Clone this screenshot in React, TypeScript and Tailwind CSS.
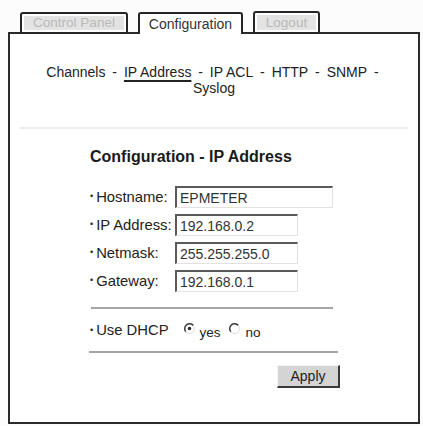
import React from "react";

function Radio({ checked }: { checked: boolean }) {
  return (
    <svg width="11" height="11" viewBox="0 0 12 12" className="shrink-0">
      <circle cx="6" cy="6" r="5" fill="#ffffff" />
      <path d="M10.2 2.8 A5 5 0 0 0 2 9.6" stroke="#3a3a3a" strokeWidth="1.6" fill="none" />
      <path d="M10.2 2.8 A5 5 0 0 1 2 9.6" stroke="#d8d8d8" strokeWidth="1" fill="none" />
      {checked && <circle cx="6" cy="6" r="1.9" fill="#2a2a2a" />}
    </svg>
  );
}

function Field({ label, value, wide }: { label: string; value: string; wide?: boolean }) {
  return (
    <div className="flex h-[28px] items-center">
      <div className="flex w-[85px] items-center">
        <span className="mr-[3px] text-[9px] leading-none">•</span>
        <span className="text-[14.8px] leading-none">{label}</span>
      </div>
      <input
        readOnly
        value={value}
        className={`${wide ? "w-[158px]" : "w-[123px]"} h-[22px] border-b border-l-2 border-r border-t-2 border-b-[#e2e2e2] border-l-[#5a5a5a] border-r-[#e2e2e2] border-t-[#5a5a5a] bg-white pl-[3px] font-['Liberation_Sans',Arial,sans-serif] text-[14px] text-[#333] outline-none`}
      />
    </div>
  );
}

export default function App() {
  const sep = <span className="mx-[3px]"> - </span>;
  return (
    <div className="h-[426px] w-[423px] overflow-hidden bg-[#fdfcfc] pl-[8px] pt-[11px] font-['Liberation_Sans',Arial,sans-serif] text-[#222]">
      <div className="relative z-10 flex h-[23px] items-end gap-[10px] pl-[12px]">
        <div className="h-[22px] w-[108px] rounded-t-[3px] border-2 border-[#262626] bg-white p-[2px]">
          <div className="flex h-full items-center justify-center bg-[#e3e3e3] text-[13.5px] leading-none text-[#b9b9b9]">
            Control Panel
          </div>
        </div>
        <div className="flex h-[22px] w-[105px] items-center justify-center rounded-t-[3px] border-2 border-b-0 border-[#262626] bg-white pb-[1px] text-[14px] leading-none text-[#333]">
          Configuration
        </div>
        <div className="h-[23px] w-[67px] rounded-t-[3px] border-2 border-[#262626] bg-white p-[2px]">
          <div className="flex h-full items-center justify-center bg-[#e3e3e3] text-[13.5px] leading-none text-[#b9b9b9]">
            Logout
          </div>
        </div>
      </div>
      <div className="-mt-[2px] h-[392px] w-[412px] border-2 border-[#2a2a2a] bg-white">
        <div className="mx-auto w-[348px] pt-[30px] text-center text-[14px] leading-[16px] text-[#222]">
          Channels{sep}
          <span className="underline decoration-[1.5px] underline-offset-[3px]">IP Address</span>
          {sep}IP ACL{sep}HTTP{sep}SNMP{sep}Syslog
        </div>
        <div className="mx-[10px] mt-[31px] h-[2px] bg-[#ededed]" />
        <div className="ml-[80px] w-[250px]">
          <div className="mt-[18px] text-[16px] font-bold leading-[19px] text-[#1a1a1a]">
            Configuration - IP Address
          </div>
          <div className="mt-[17px]">
            <Field label="Hostname:" value="EPMETER" wide />
            <Field label="IP Address:" value="192.168.0.2" />
            <Field label="Netmask:" value="255.255.255.0" />
            <Field label="Gateway:" value="192.168.0.1" />
          </div>
          <div className="ml-[1px] mt-[12px] h-[2px] w-[242px] bg-[#a6a6a6]" />
          <div className="mt-[7px] flex h-[28px] items-center">
            <span className="mr-[3px] text-[9px] leading-none">•</span>
            <span className="text-[14.8px] leading-none">Use DHCP</span>
            <span className="ml-[15px] -mt-[4px]">
              <Radio checked />
            </span>
            <span className="ml-[5px] mt-[5px] text-[13.5px] leading-none">yes</span>
            <span className="ml-[8px] -mt-[4px]">
              <Radio checked={false} />
            </span>
            <span className="ml-[6px] mt-[5px] text-[13.5px] leading-none">no</span>
          </div>
          <div className="-ml-[1px] mt-[7px] h-[2px] w-[249px] bg-[#a6a6a6]" />
          <div className="mt-[12px] flex w-[250px] justify-end">
            <div className="flex h-[23px] w-[63px] items-center justify-center border-b-2 border-l border-r-2 border-t border-b-[#3a3a3a] border-l-[#f2f2f2] border-r-[#3a3a3a] border-t-[#f2f2f2] bg-[#d4d4d4] text-[14px] leading-none text-[#222]">
              Apply
            </div>
          </div>
        </div>
      </div>
    </div>
  );
}
